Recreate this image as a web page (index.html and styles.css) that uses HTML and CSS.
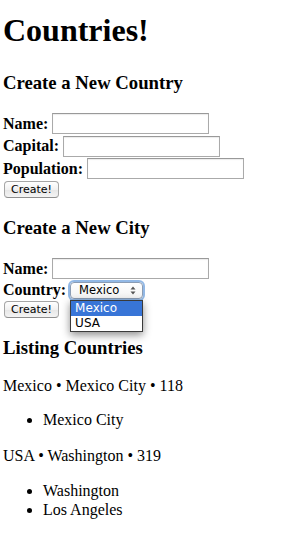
FILE: index.html
```
<!DOCTYPE html>
<html>
<head>
<meta charset="utf-8">
<title>Countries!</title>
<link rel="stylesheet" href="styles.css">
</head>
<body>
<h1 class="title">Countries!</h1>

<h3 class="section-title first">Create a New Country</h3>
<form class="form">
  <div class="row"><label class="label" for="c-name">Name:</label><input class="text-input" id="c-name" type="text"></div>
  <div class="row"><label class="label" for="c-capital">Capital:</label><input class="text-input" id="c-capital" type="text"></div>
  <div class="row"><label class="label" for="c-pop">Population:</label><input class="text-input" id="c-pop" type="text"></div>
  <div class="button-row"><button class="button" type="button">Create!</button></div>
</form>

<h3 class="section-title">Create a New City</h3>
<form class="form">
  <div class="row"><label class="label" for="ci-name">Name:</label><input class="text-input" id="ci-name" type="text"></div>
  <div class="row select-row"><label class="label" for="ci-country">Country:</label>
    <div class="select-wrap">
      <div class="select" id="ci-country"><span class="select-value">Mexico</span>
        <svg class="select-arrows" width="6" height="9" viewBox="0 0 6 9"><path d="M3 0.5 L5.5 3.5 L0.5 3.5 Z M3 8.5 L5.5 5.5 L0.5 5.5 Z" fill="#555"/></svg>
      </div>
      <ul class="dropdown">
        <li class="option selected">Mexico</li>
        <li class="option">USA</li>
      </ul>
    </div>
  </div>
  <div class="button-row"><button class="button" type="button">Create!</button></div>
</form>

<h3 class="section-title">Listing Countries</h3>
<p class="country">Mexico • Mexico City • 118</p>
<ul class="cities">
  <li>Mexico City</li>
</ul>
<p class="country">USA • Washington • 319</p>
<ul class="cities">
  <li>Washington</li>
  <li>Los Angeles</li>
</ul>
</body>
</html>
```
FILE: styles.css
```
html, body {
  margin: 0;
  padding: 0;
  background: #fff;
}
body {
  padding: 0 3px;
  font-family: "Liberation Serif", "Times New Roman", serif;
  font-size: 16px;
  color: #000;
}
.title {
  font-size: 32px;
  line-height: 37px;
  margin: 12px 0 0;
  font-weight: bold;
}
.section-title {
  font-size: 18.72px;
  line-height: 22px;
  font-weight: bold;
  margin: 19px 0 0;
}
.section-title.first {
  margin-top: 23px;
}
.form {
  margin: 19px 0 0;
  display: flex;
  flex-direction: column;
  gap: 1.5px;
}
.row {
  display: flex;
  align-items: center;
  gap: 4px;
  height: 21px;
}
.label {
  font-weight: bold;
  line-height: 18px;
}
.text-input {
  box-sizing: border-box;
  width: 157px;
  height: 21px;
  margin: 0;
  border: 1px solid #aaa;
  border-top-color: #999;
  box-shadow: inset 0 1px 1px rgba(0,0,0,0.08);
  background: #fff;
  padding: 0 3px;
  font-family: "DejaVu Sans", sans-serif;
  font-size: 11px;
}
.button-row {
  display: flex;
  margin-top: 0.5px;
}
.button {
  box-sizing: border-box;
  width: 55px;
  height: 17px;
  margin: 0 0 0 1px;
  padding: 0;
  border: 1px solid #a6a6a6;
  border-bottom-color: #8e8e8e;
  border-radius: 4px;
  background: linear-gradient(#ffffff, #f1f1f1 50%, #e6e6e6 51%, #f4f4f4);
  font-family: "DejaVu Sans", sans-serif;
  font-size: 11px;
  line-height: 15px;
  color: #000;
}
.select-row {
  height: 18px;
  margin-top: 0.5px;
}
.select-wrap {
  position: relative;
  margin-left: 0;
}
.select {
  box-sizing: border-box;
  width: 73px;
  height: 17px;
  display: flex;
  align-items: center;
  justify-content: space-between;
  padding: 0 6px 0 8px;
  border: 1px solid #8a9cb4;
  border-radius: 4px;
  background: linear-gradient(#ffffff, #f3f3f3);
  box-shadow: 0 0 0 2px rgba(110, 160, 220, 0.75);
  font-family: "DejaVu Sans", sans-serif;
  font-size: 11.5px;
  line-height: 13px;
}
.select-arrows {
  display: block;
}
.dropdown {
  position: absolute;
  left: 0;
  top: 18px;
  width: 73px;
  box-sizing: border-box;
  margin: 0;
  padding: 0;
  list-style: none;
  background: #fff;
  border: 1px solid #3a3a3a;
  box-shadow: 0 3px 8px rgba(0,0,0,0.45);
  font-family: "DejaVu Sans", sans-serif;
  font-size: 12px;
  line-height: 15px;
  z-index: 2;
}
.option {
  padding: 0 4px;
  height: 15px;
}
.option.selected {
  background: #3875d7;
  color: #fff;
}
.country {
  margin: 17.5px 0 0;
  line-height: 18.4px;
}
.cities {
  margin: 16.5px 0 0;
  padding-left: 40px;
  line-height: 18.4px;
}
```
